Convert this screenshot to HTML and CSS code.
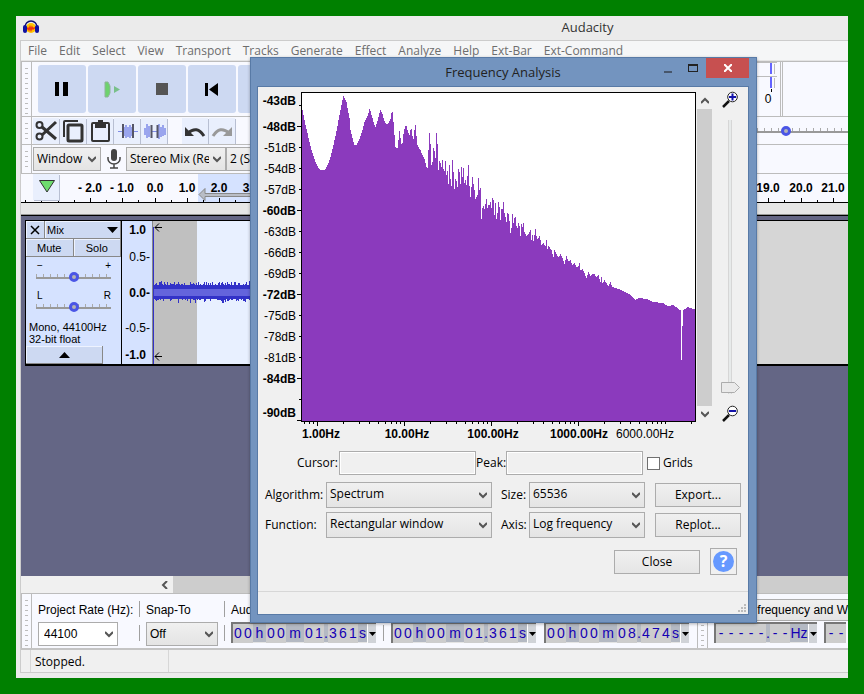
FILE: index.html
```html
<!DOCTYPE html>
<html lang="en">

<head>
	<meta charset="UTF-8">
	<title>Audacity</title>
	<link rel="stylesheet" href="styles.css">
</head>

<body>
	<div class="window">
		<header class="titlebar">
			<svg class="appIcon" width="16" height="14" viewBox="0 0 16 14">
				<circle cx="8" cy="8" r="5" fill="#ffc400"/>
				<path d="M3 9h1l1-1 1 2 1-3 1 3 1-3 1 2 1-1h2" fill="none" stroke="#f03010" stroke-width="1.4"/>
				<path d="M2 9V7a6 6 0 0 1 12 0v2" fill="none" stroke="#10106e" stroke-width="1.4"/>
				<rect x="0" y="5" width="4" height="8" rx="2" fill="#1010a0"/>
				<rect x="12" y="5" width="4" height="8" rx="2" fill="#1010a0"/>
			</svg>
			<span class="windowTitle">Audacity</span>
		</header>
		<div class="client">
			<nav class="menubar">
				<button>File</button>
				<button>Edit</button>
				<button>Select</button>
				<button>View</button>
				<button>Transport</button>
				<button>Tracks</button>
				<button>Generate</button>
				<button>Effect</button>
				<button>Analyze</button>
				<button>Help</button>
				<button>Ext-Bar</button>
				<button>Ext-Command</button>
			</nav>

			<div class="toolbar transport">
				<div class="grip"></div>
				<div class="transportButtons">
					<button aria-label="Pause"><svg width="48" height="48"><path d="M17 17h4v14h-4zM25 17h5v14h-5z" fill="#000"/></svg></button>
					<button aria-label="Play"><svg width="48" height="48"><path d="M17 17h3l2 4v7l-2 4h-3z" fill="#6dd36d" stroke="#8fb39a"/><path d="M26 21l6 3.500l-6 3.500z" fill="#79c08a"/></svg></button>
					<button aria-label="Stop"><svg width="48" height="48"><path d="M18 18h12v12h-12z" fill="#555"/></svg></button>
					<button aria-label="Skip to start"><svg width="48" height="48"><path d="M17 18h3v13h-3zM30 18v13l-9-6.500z" fill="#000"/></svg></button>
					<button aria-label="Skip to end"></button>
				</div>
				<div class="meter">
					<svg width="91" height="54">
						<path d="M0 .5h20M0 14.500h20M17.500 2v10M17.500 16v10" stroke="#bcbcbc" fill="none"/>
						<path d="M14 1v11M14 15v11" stroke="#6464ff" stroke-width="2"/>
						<path d="M14.500 27v3" stroke="#000"/>
						<text x="11" y="41" text-anchor="middle">0</text>
						<path d="M23.500 0v54M25.500 0v54" stroke="#bcbcbc"/>
					</svg>
				</div>
			</div>

			<div class="toolbar edit">
				<div class="grip"></div>
				<div class="editButtons">
					<button aria-label="Cut"><svg width="26" height="26" fill="none" stroke="#333" stroke-width="2"><circle cx="6.500" cy="7" r="3"/><circle cx="6.500" cy="18.500" r="3"/><path d="M9 9l14 12M9 17L23 4" stroke-width="3"/></svg></button>
					<button aria-label="Copy"><svg width="26" height="26" fill="none" stroke="#333" stroke-width="3"><rect x="8" y="7" width="14" height="16" rx="1"/><path d="M4 19V4q0-1 1-1h13" stroke-width="2"/></svg></button>
					<button aria-label="Paste"><svg width="26" height="26" fill="none" stroke="#333" stroke-width="2"><rect x="5" y="5" width="17" height="18" rx="1"/><path d="M9 5h9v4h-9z" fill="#333"/><path d="M11 3h5"/></svg></button>
					<button aria-label="Trim"><svg width="26" height="26" fill="none" stroke="#7f8ce8"><path d="M4 13.500h5M19 13.500h5"/><path d="M10 9v9M12 7v13M14 9v10M16 7v13M18 9v9" stroke-width="1.500"/><path d="M9 6v14M19 6v14" stroke="#556" stroke-width="2"/></svg></button>
					<button aria-label="Silence"><svg width="26" height="26" fill="none" stroke="#7f8ce8"><path d="M4 10v7M6 6v14M8 8v11M18 6v15M20 9v10M22 7v11M24 10v7" stroke-width="1.500"/><path d="M10 13.500h7"/><path d="M10.500 7v13M16.500 7v13" stroke="#556" stroke-width="2"/></svg></button>
					<button class="spaced" aria-label="Undo"><svg width="26" height="26" fill="none" stroke="#333" stroke-width="3"><path d="M6 15q9-8 16 3"/><path d="M3 9v9h9z" fill="#333" stroke="none"/></svg></button>
					<button aria-label="Redo"><svg width="26" height="26" fill="none" stroke="#999" stroke-width="3"><path d="M20 15q-9-8-16 3"/><path d="M23 9v9h-9z" fill="#999" stroke="none"/></svg></button>
				</div>
				<input class="ringSlider speed" type="range" value="30" aria-label="Playback speed">
			</div>

			<div class="toolbar device">
				<div class="grip"></div>
				<select class="host" aria-label="Audio host"><option>Window</option></select>
				<svg class="mic" width="14" height="20" viewBox="0 0 14 20"><rect x="4" y="0" width="6" height="12" rx="3" fill="#444"/><path d="M1 8v2a6 5 0 0 0 12 0V8M7 15v4M3 19h8" fill="none" stroke="#444" stroke-width="1.500"/></svg>
				<select class="recording" aria-label="Recording device"><option>Stereo Mix (Realtek High Definition Audio)</option></select>
				<select class="channels" aria-label="Recording channels"><option>2 (Stereo) Recording Channels</option></select>
			</div>

			<div class="timeline">
				<svg id="timelineScale" width="100%" height="29">
					<rect x="177" y="0" width="540" height="28" fill="#d5e2ff"/>
					<path d="M178 20.500l6-6v5h530v3h-530v4z" fill="#b9bdc6" stroke="#888"/>
				</svg>
				<button class="pin" aria-label="Pinned play head"><svg width="26" height="26"><path d="M6.500 6.500h15l-7.500 11.500z" fill="#6edc6e" stroke="#333"/></svg></button>
			</div>
			<div class="rulerGap"></div>

			<main class="tracks">
				<section class="track">
					<div class="trackPanel">
						<div class="trackHead">
							<button class="closeTrack" aria-label="Close track"><svg width="10" height="10"><path d="M1 1l8 8M9 1l-8 8" stroke="#000" stroke-width="1.500"/></svg></button>
							<button class="trackName">Mix<svg width="11" height="6"><path d="M0 0h11l-5.500 6z"/></svg></button>
						</div>
						<div class="muteSolo">
							<button>Mute</button>
							<button>Solo</button>
						</div>
						<div class="sliderLabels"><span>−</span><span>+</span></div>
						<input class="ringSlider" type="range" aria-label="Gain">
						<div class="sliderLabels second"><span>L</span><span>R</span></div>
						<input class="ringSlider" type="range" aria-label="Pan">
						<div class="trackInfo">Mono, 44100Hz<br>32-bit float</div>
						<button class="collapse" aria-label="Collapse track"><svg width="11" height="6"><path d="M0 6h11l-5.500-6z"/></svg></button>
					</div>
					<div class="levels">
						<b>1.0</b>
						<span>0.5-</span>
						<b>0.0-</b>
						<span>-0.5-</span>
						<b>-1.0</b>
					</div>
					<svg id="wave" class="wave" width="100%" height="143">
						<rect width="44" height="143" fill="#c0c0c0"/>
						<rect x="44" width="540" height="143" fill="#e8f0ff"/>
						<path d="M.5 6v137" stroke="#3232c8"/>
						<path d="M2 6.500h7M6 2.500l-4 4l4 4M2 135.500h7M6 131.500l-4 4l4 4" fill="none" stroke="#000"/>
					</svg>
				</section>
			</main>

			<div class="hscroll">
				<button aria-label="Scroll left"><svg width="8" height="8"><path d="M6 0L2 4l4 4" fill="none" stroke="#555" stroke-width="2"/></svg></button>
				<div class="hthumb"></div>
			</div>

			<div class="toolbar selection">
				<div class="grip"></div>
				<div class="field rate">
					<label for="rate">Project Rate (Hz):</label>
					<select id="rate"><option>44100</option></select>
				</div>
				<div class="divider"></div>
				<div class="field snap">
					<label for="snap">Snap-To</label>
					<select id="snap"><option>Off</option></select>
				</div>
				<div class="divider"></div>
				<div class="field">
					<span class="fieldLabel">Audio Position</span>
					<div class="clock"><i>0</i><i>0</i><span class="h">h</span><i>0</i><i>0</i><span class="m">m</span><i>0</i><i>1</i><span class="dot">.</span><i>3</i><i>6</i><i>1</i><span class="s">s</span><button aria-label="Position format"></button></div>
				</div>
				<div class="divider low"></div>
				<div class="field low">
					<div class="clock"><i>0</i><i>0</i><span class="h">h</span><i>0</i><i>0</i><span class="m">m</span><i>0</i><i>1</i><span class="dot">.</span><i>3</i><i>6</i><i>1</i><span class="s">s</span><button aria-label="Start format"></button></div>
					<div class="clock"><i>0</i><i>0</i><span class="h">h</span><i>0</i><i>0</i><span class="m">m</span><i>0</i><i>8</i><span class="dot">.</span><i>4</i><i>7</i><i>4</i><span class="s">s</span><button aria-label="End format"></button></div>
				</div>
				<div class="grip spectralGrip"></div>
				<div class="spectral">
					<select aria-label="Spectral selection"><option>Center frequency and Width</option></select>
					<div class="spectralClocks">
						<div class="clock"><i>-</i><i>-</i><i>-</i><i>-</i><i>-</i><span class="dot">.</span><i>-</i><i>-</i><span class="hz">Hz</span><button aria-label="Frequency format"></button></div>
						<div class="clock"><i>-</i><i>-</i></div>
					</div>
				</div>
			</div>

			<footer class="statusbar"><span>Stopped.</span></footer>
		</div>
	</div>

	<div class="dialog" role="dialog" aria-labelledby="dialogTitle">
		<div class="dialogBar">
			<h2 id="dialogTitle">Frequency Analysis</h2>
			<div class="windowButtons">
				<button aria-label="Minimize"><svg width="8" height="12"><path d="M0 10h8" stroke="#47566b" stroke-width="2"/></svg></button>
				<button aria-label="Maximize"><svg width="10" height="8"><path d="M0 1h10" stroke="#222" stroke-width="2"/><path d="M.5 0v8M9.500 0v8M0 7.500h10" stroke="#222"/></svg></button>
				<button class="closeButton" aria-label="Close"><svg width="8" height="8"><path d="M0 0l8 8M8 0L0 8" stroke="#fff" stroke-width="2"/></svg></button>
			</div>
		</div>
		<div class="dialogBody">
			<div class="plotRow">
				<svg id="plot" class="plot" width="438" height="354">
					<rect x="43.500" y="5.500" width="394" height="329" fill="#fff" stroke="#000"/>
				</svg>
				<div class="vscroll">
					<button aria-label="Scroll up"><svg width="8" height="8"><path d="M0 6l4-4l4 4" fill="none" stroke="#555" stroke-width="2"/></svg></button>
					<div class="vthumb"></div>
					<button aria-label="Scroll down"><svg width="8" height="8"><path d="M0 2l4 4l4-4" fill="none" stroke="#555" stroke-width="2"/></svg></button>
				</div>
				<div class="zoomColumn">
					<svg width="17" height="17"><path d="M7 10l-6 6" stroke="#111" stroke-width="2.500"/><circle cx="10.500" cy="6" r="4.800" fill="#fff" stroke="#222"/><path d="M7 6h7M10.500 2.500v7" stroke="#1414aa" stroke-width="2"/></svg>
					<input class="zoomSlider" type="range" value="100" aria-label="Zoom">
					<svg width="17" height="17"><path d="M7 10l-6 6" stroke="#111" stroke-width="2.500"/><circle cx="10.500" cy="6" r="4.800" fill="#fff" stroke="#222"/><path d="M7 6h7" stroke="#1414aa" stroke-width="2"/></svg>
				</div>
			</div>
			<div class="readouts">
				<label for="cursor">Cursor:</label>
				<input id="cursor" type="text" readonly>
				<label for="peak">Peak:</label>
				<input id="peak" type="text" readonly>
				<label class="grids"><input type="checkbox">Grids</label>
			</div>
			<div class="options">
				<label for="algorithm">Algorithm:</label>
				<select id="algorithm"><option>Spectrum</option></select>
				<label class="inner" for="size">Size:</label>
				<select id="size"><option>65536</option></select>
				<button class="push">Export...</button>
				<label for="function">Function:</label>
				<select id="function"><option>Rectangular window</option></select>
				<label class="inner" for="axis">Axis:</label>
				<select id="axis"><option>Log frequency</option></select>
				<button class="push">Replot...</button>
			</div>
			<div class="closeRow">
				<button class="push">Close</button>
				<button class="help" aria-label="Help"><span>?</span></button>
			</div>
			<div class="dialogStatus">
				<svg width="8" height="8" fill="#bbb"><path d="M6 0h2v2h-2zM3 3h2v2h-2zM6 3h2v2h-2zM0 6h2v2h-2zM3 6h2v2h-2zM6 6h2v2h-2z"/></svg>
			</div>
		</div>
	</div>

	<script>
		// x, y pairs inside the plot, columns in between are interpolated
		const spectrum = [
			0,17, 1,22, 2,27, 3,32, 4,36, 5,40, 6,45, 7,49, 8,53, 9,57, 11,63, 13,69, 15,73, 17,76, 19,77, 22,77, 24,74, 26,70, 28,64, 30,56,
			32,47, 34,38, 36,27, 38,17, 40,7, 41,3, 42,5, 44,9, 45,15, 47,25, 48,37, 50,45, 52,52, 54,52, 56,48, 58,43, 60,37, 62,29, 65,23, 67,16,
			68,18, 70,25, 72,32, 73,34, 75,28, 77,20, 78,17, 80,21, 82,28, 84,31, 86,30, 88,26, 89,20, 90,19, 91,29, 92,42, 93,54, 95,55, 96,47,
			97,38, 98,45, 99,51, 100,50, 101,41, 102,36, 103,33, 104,33, 105,37, 107,42, 108,37, 109,36, 110,43, 111,46, 112,37, 113,32, 114,43,
			115,52, 116,54, 118,57, 120,62, 122,66, 124,74, 125,75, 126,57, 127,40, 128,51, 129,72, 130,69, 131,55, 132,58, 133,65, 134,40,
			135,51, 136,77, 137,68, 138,70, 139,74, 140,67, 141,76, 142,78, 143,68, 144,82, 145,78, 146,91, 147,72, 148,86, 149,93, 150,67,
			151,79, 152,96, 153,86, 154,88, 155,94, 156,76, 157,79, 158,91, 159,74, 160,84, 161,75, 162,90, 163,87, 164,92, 165,83, 166,72,
			167,93, 168,104, 169,94, 170,84, 171,91, 172,97, 173,106, 174,104, 175,102, 176,85, 177,97, 178,95, 179,126, 180,115, 181,113,
			182,116, 183,111, 184,106, 185,115, 186,112, 187,112, 188,109, 189,115, 190,105, 191,107, 192,122, 193,110, 194,126, 195,120,
			196,109, 197,114, 198,127, 199,116, 200,116, 201,109, 202,120, 203,124, 204,129, 205,120, 206,121, 207,128, 208,140, 209,135,
			210,121, 211,130, 212,125, 213,124, 214,133, 215,135, 216,130, 217,133, 218,143, 219,131, 220,134, 221,130, 222,139, 224,143,
			226,141, 228,137, 229,147, 230,142, 231,148, 233,136, 234,143, 235,146, 237,143, 238,147, 239,152, 241,150, 243,153, 244,147,
			245,156, 246,153, 249,157, 251,164, 252,157, 254,161, 256,164, 258,161, 260,165, 262,171, 264,163, 266,168, 268,167, 270,172,
			272,170, 274,174, 276,173, 277,170, 278,177, 280,176, 282,180, 284,185, 286,179, 288,183, 290,181, 292,181, 294,184, 296,182,
			298,189, 299,184, 300,190, 302,187, 304,190, 306,193, 308,189, 310,194, 313,195, 317,196, 323,199, 328,202, 333,207, 336,205,
			345,206, 351,209, 361,210, 365,213, 371,212, 376,216, 378,217, 379,267, 380,233, 381,217, 385,214, 391,216, 393,216
		]
		const svgNS = 'http://www.w3.org/2000/svg'
		function add(parent, name, attrs, text) {
			const el = document.createElementNS(svgNS, name)
			for (const key in attrs) {
				el.setAttribute(key, attrs[key])
			}
			if (text) {
				el.textContent = text
			}
			parent.appendChild(el)
		}

		// frequency plot
		const plot = document.getElementById('plot')
		let d = 'M44 334'
		for (let i = 0; i < spectrum.length - 2; i += 2) {
			const [x0, y0, x1, y1] = spectrum.slice(i, i + 4)
			for (let x = x0; x < x1; x++) {
				d += 'V' + (6 + Math.round(y0 + (y1 - y0) * (x - x0) / (x1 - x0))) + 'h1'
			}
		}
		add(plot, 'path', { d: d + 'V334z', fill: '#8b3abd' })

		let ticks = ''
		for (let db = 45; db <= 90; db += 3) {
			const y = 18 + (db - 45) * 7
			const major = db % 12 === 0 || db === 90
			ticks += 'M' + (major ? 39 : 41) + ' ' + (y + 0.5) + 'H43'
			if (db !== 45 && db < 87) {
				add(plot, 'text', { x: 38, y: y + 5, 'text-anchor': 'end', class: major ? 'major' : '' }, '-' + db + 'dB')
			}
		}
		add(plot, 'text', { x: 38, y: 18, 'text-anchor': 'end', class: 'major' }, '-43dB')
		add(plot, 'text', { x: 38, y: 330, 'text-anchor': 'end', class: 'major' }, '-90dB')
		for (let decade = -1; decade < 5; decade++) {
			for (let k = 1; k < 10; k++) {
				const x = 59 + Math.round(87 * (decade + Math.log10(k)))
				if (x > 43 && x < 434) {
					ticks += 'M' + (x + 0.5) + ' 335v' + (k === 1 && decade < 4 ? 4 : 2)
				}
			}
		}
		add(plot, 'path', { d: ticks, stroke: '#000' })
		const freqLabels = ['1.00Hz', '10.00Hz', '100.00Hz', '1000.00Hz']
		freqLabels.forEach((label, i) => {
			add(plot, 'text', { x: 63 + 86 * i, y: 351, 'text-anchor': 'middle', class: 'major' }, label)
		})
		add(plot, 'text', { x: 387, y: 351, 'text-anchor': 'middle' }, '6000.00Hz')

		// timeline
		const timeline = document.getElementById('timelineScale')
		const labelled = [-2, -1, 0, 1, 2, 3, 19, 20, 21]
		let scale = ''
		for (let t = -4; t < 22; t += 0.5) {
			const x = Math.round(133.5 + t * 32.3)
			const shown = labelled.includes(t)
			scale += 'M' + (x + 0.5) + ' 28v' + (shown ? -4 : -2)
			if (shown) {
				add(timeline, 'text', { x: x, y: 18, 'text-anchor': 'middle', class: 'major' }, (t < 0 ? '- ' : '') + Math.abs(t).toFixed(1))
			}
		}
		add(timeline, 'path', { d: scale + 'M0 28.500H2000', stroke: '#000' })

		// waveform
		const wave = document.getElementById('wave')
		let seed = 7
		function noise() {
			seed = (seed * 16807) % 2147483647
			return seed / 2147483647
		}
		let peaks = ''
		for (let x = 1; x < 600; x++) {
			const up = 7 + Math.floor(noise() * noise() * 5)
			const down = 7 + Math.floor(noise() * noise() * 5)
			peaks += 'M' + (x + 0.5) + ' ' + (71 - up) + 'v' + (up + down)
		}
		add(wave, 'path', { d: peaks, stroke: '#3232c8' })
		add(wave, 'rect', { x: 1, y: 68, width: 600, height: 7, fill: '#6464dc' })
	</script>
</body>

</html>
```
FILE: styles.css
```css
* {
	box-sizing: border-box;
}
body {
	display: flex;
	min-height: 100vh;
	margin: 0;
	padding: 16px;
	background: #008000;
	font-family: "Open Sans", "Noto Sans", sans-serif;
	font-size: 12px;
	line-height: 16px;
	color: #000;
}
button, select, input {
	margin: 0;
	padding: 0;
	border: 0;
	border-radius: 0;
	background: none;
	font: inherit;
	color: inherit;
}
svg {
	display: block;
}
svg text {
	font-family: "Liberation Sans", Arial, sans-serif;
	font-size: 12px;
}
svg text.major {
	font-weight: bold;
}
select {
	appearance: none;
	height: 24px;
	padding: 0 16px 0 3px;
	border: 1px solid #acacac;
	background: url("data:image/svg+xml,%3Csvg xmlns='http://www.w3.org/2000/svg' width='8' height='7'%3E%3Cpath d='M0 1l4 4l4-4' fill='none' stroke='%23555' stroke-width='2'/%3E%3C/svg%3E") no-repeat right 4px center, linear-gradient(#f0f0f0, #e4e4e4);
}

.window {
	display: flex;
	flex-direction: column;
	flex: 1;
	min-width: 0;
	padding: 0 0 5px 4px;
	background: #ebebeb;
	overflow: hidden;
}
.titlebar {
	display: flex;
	align-items: center;
	height: 24px;
	padding: 0 0 2px 3px;
}
.windowTitle {
	flex: 1;
	padding-left: 288px;
	text-align: center;
	font-size: 13px;
	color: #333;
}
.client {
	display: flex;
	flex-direction: column;
	flex: 1;
	border: 1px solid #ccc;
	border-right: 0;
	background: #f0f0f0;
}
.menubar {
	display: flex;
	gap: 12px;
	height: 20px;
	padding-left: 7px;
	border-bottom: 1px solid #e4e4e4;
	background: #f5f6f7;
	color: #6d6d6d;
}
.menubar button {
	white-space: nowrap;
}

.toolbar {
	display: flex;
	align-items: center;
	border-top: 1px solid #bcbcbc;
	background: #f8f9ff;
}
.grip {
	flex: none;
	align-self: stretch;
	width: 11px;
	border: solid #bcbcbc;
	border-width: 0 1px;
	background: repeating-linear-gradient(transparent 0 4px, #bcbcbc 4px 5px) content-box;
	padding: 2px 3px;
}
.transport {
	height: 55px;
}
.transportButtons {
	display: flex;
	gap: 2px;
	padding-left: 6px;
}
.transportButtons button {
	width: 48px;
	height: 48px;
	border-radius: 3px;
	background: #cdd9f2;
}
.meter, .speed {
	width: 91px;
	margin-left: auto;
}
.edit {
	height: 28px;
}
.editButtons {
	display: flex;
	gap: 1px;
	padding-left: 1px;
}
.editButtons button, .pin {
	width: 26px;
	height: 26px;
	background: #e9effd;
	box-shadow: 1px 1px #b8bfd2;
}
.editButtons .spaced {
	margin-left: 14px;
}
.device {
	height: 29px;
}
.device select {
	flex: none;
}
.host {
	width: 68px;
	margin-left: 1px;
}
.mic {
	margin: 0 5px 0 6px;
}
.recording {
	width: 100px;
}
.channels {
	width: 110px;
}
.timeline {
	display: grid;
	border-top: 1px solid #bcbcbc;
	background: #f8f9ff;
}
.timeline > * {
	grid-area: 1 / 1;
}
.pin {
	margin-left: 12px;
}
.rulerGap {
	height: 13px;
	border-bottom: 1px solid #000;
	background: #e6e6e6;
	box-shadow: inset 0 -1px #999;
}

.ringSlider {
	appearance: none;
	height: 12px;
	background: linear-gradient(#999, #999) 0 6px / 100% 2px no-repeat, repeating-linear-gradient(90deg, #aaa 0 1px, transparent 1px 7px) 0 3px / 100% 3px no-repeat;
}
.ringSlider::-webkit-slider-thumb {
	appearance: none;
	width: 10px;
	height: 10px;
	border: 3px solid #4a55e6;
	border-radius: 50%;
	background: #b4b4b4;
}

.tracks {
	flex: 1;
	padding: 4px 0 0 4px;
	background: #646685;
}
.track {
	display: flex;
	border: solid #000;
	border-width: 1px 0 2px 1px;
	font-family: "Liberation Sans", Arial, sans-serif;
	background: #d6d6d6;
}
.trackPanel {
	display: flex;
	flex-direction: column;
	flex: none;
	width: 96px;
	border-right: 1px solid #000;
	background: #d5e2ff;
}
.trackPanel button {
	display: flex;
	align-items: center;
	justify-content: center;
	height: 18px;
	border: solid #888;
	border-width: 0 1px 1px 0;
	background: #cdd9f2;
	box-shadow: inset 1px 1px #eef3ff;
	font-size: 11px;
}
.trackHead, .muteSolo {
	display: flex;
}
.trackPanel .closeTrack {
	width: 19px;
}
.trackPanel .trackName {
	flex: 1;
	justify-content: space-between;
	padding: 0 2px;
}
.muteSolo button {
	flex: 1;
}
.trackPanel .ringSlider {
	width: 75px;
	margin-left: 10px;
}
.sliderLabels {
	display: flex;
	justify-content: space-between;
	height: 11px;
	margin: 3px 10px 0 11px;
	font-size: 10px;
	line-height: 11px;
}
.sliderLabels.second {
	margin-top: 7px;
}
.trackInfo {
	margin-top: 8px;
	padding-left: 3px;
	font-size: 11px;
	line-height: 12px;
}
.trackPanel .collapse {
	width: 77px;
	margin-top: auto;
}
.levels {
	display: grid;
	grid-template-rows: 18px 36px 1fr 36px 18px;
	align-items: center;
	flex: none;
	width: 31px;
	padding-right: 2px;
	border-right: 1px solid #888;
	background: #d5e2ff;
	text-align: right;
}
.levels b:first-child, .levels b:last-child {
	padding-right: 4px;
}
.wave {
	flex: 1;
	min-width: 0;
}

.hscroll {
	display: flex;
	height: 17px;
	padding-left: 136px;
}
.hscroll button {
	display: flex;
	align-items: center;
	justify-content: center;
	width: 16px;
}
.hthumb {
	flex: 1;
	background: #cdcdcd;
}

.selection {
	height: 57px;
	border-bottom: 2px solid #c4c4c4;
	font-family: "Liberation Sans", Arial, sans-serif;
	overflow: hidden;
}
.field {
	display: flex;
	flex-direction: column;
	flex: none;
	align-self: stretch;
	gap: 4px;
	padding-top: 8px;
}
.field.low {
	flex-direction: row;
	gap: 8px;
	padding-top: 28px;
}
.rate {
	width: 101px;
	margin-left: 6px;
}
.rate label {
	white-space: nowrap;
}
.rate select {
	width: 80px;
	padding-left: 5px;
	background-color: #fff;
	background-image: url("data:image/svg+xml,%3Csvg xmlns='http://www.w3.org/2000/svg' width='8' height='7'%3E%3Cpath d='M0 1l4 4l4-4' fill='none' stroke='%23555' stroke-width='2'/%3E%3C/svg%3E");
}
.snap {
	width: 72px;
}
.divider {
	flex: none;
	width: 1px;
	height: 40px;
	margin: 0 6px;
	background: linear-gradient(#a0a0a0 0 16px, transparent 16px 24px, #a0a0a0 24px);
}
.rate + .divider {
	margin-left: 0;
}
.divider.low {
	margin: 0 7px;
	background: linear-gradient(transparent 0 24px, #a0a0a0 24px);
}
.clock {
	display: flex;
	flex: none;
	height: 21px;
	border: solid #777;
	border-width: 2px 0 0 2px;
	box-shadow: inset -1px -1px #e4e4e4;
	background: #b4b9c3;
	font-size: 14px;
	line-height: 18px;
	color: #1400b4;
}
.clock i {
	width: 10px;
	background: #cdcdcd;
	font-style: normal;
	text-align: center;
}
.clock span {
	text-align: center;
}
.clock .h {
	width: 13px;
}
.clock .m {
	width: 18px;
}
.clock .dot {
	width: 4px;
}
.clock .s {
	width: 9px;
}
.clock .hz {
	width: 18px;
}
.clock button {
	width: 9px;
	border-left: 1px solid #fff;
	background: url("data:image/svg+xml,%3Csvg xmlns='http://www.w3.org/2000/svg' width='7' height='4'%3E%3Cpath d='M0 0h7l-3.500 4z'/%3E%3C/svg%3E") no-repeat center #d0d3d8;
}
.spectralGrip {
	margin-left: 8px;
}
.spectral {
	display: flex;
	flex-direction: column;
	flex: none;
	align-self: stretch;
	gap: 1px;
	padding: 5px 0 0 6px;
}
.spectral select {
	width: 200px;
	height: 22px;
}
.spectralClocks {
	display: flex;
	gap: 7px;
}
.statusbar {
	display: flex;
	height: 22px;
	padding-left: 9px;
}
.statusbar span {
	width: 139px;
	padding: 4px;
	border: solid #d7d7d7;
	border-width: 0 1px;
}

.dialog {
	position: absolute;
	left: 250px;
	top: 57px;
	width: 507px;
	padding: 0 7px 7px 6px;
	border: 1px solid #587aa6;
	background: #7394bf;
	box-shadow: 0 1px 3px rgba(0, 0, 0, 0.3);
}
.dialogBar {
	display: flex;
	justify-content: flex-end;
	height: 28px;
}
.dialogBar h2 {
	flex: 1;
	margin: 0;
	padding: 6px 0 0 94px;
	text-align: center;
	font-size: 13px;
	font-weight: normal;
	color: #222;
}
.windowButtons {
	display: flex;
	height: 20px;
}
.windowButtons button {
	display: flex;
	align-items: center;
	justify-content: center;
	width: 25px;
}
.windowButtons .closeButton {
	width: 43px;
	margin-left: 1px;
	background: #c75050;
}
.dialogBody {
	border: 1px solid #587aa6;
	background: #f0f0f0;
}
.plotRow {
	display: flex;
	height: 360px;
}
.plot {
	flex: none;
}
.vscroll {
	display: flex;
	flex-direction: column;
	flex: none;
	width: 15px;
	height: 329px;
	margin: 6px 0 0 1px;
}
.vscroll button {
	display: flex;
	align-items: center;
	justify-content: center;
	height: 16px;
}
.vthumb {
	flex: 1;
	background: #cdcdcd;
}
.zoomColumn {
	display: flex;
	flex-direction: column;
	align-items: center;
	flex: 1;
	height: 335px;
	padding-top: 4px;
}
.zoomSlider {
	appearance: none;
	flex: 1;
	writing-mode: vertical-lr;
	width: 19px;
	margin: 12px 0 11px;
	background: linear-gradient(90deg, #d6d6d6 1px, #e7eaea 1px 3px, #d6d6d6 3px) center / 4px 100% no-repeat;
}
.zoomSlider::-webkit-slider-thumb {
	appearance: none;
	width: 19px;
	height: 12px;
	background: url("data:image/svg+xml,%3Csvg xmlns='http://www.w3.org/2000/svg' width='19' height='12'%3E%3Cpath d='M.5 .5h13l5 5l-5 5h-13z' fill='%23eaeaea' stroke='%23acacac'/%3E%3C/svg%3E") no-repeat;
}
.readouts {
	display: flex;
	align-items: center;
	height: 24px;
	margin: 4px 0 0 39px;
}
.readouts label {
	flex: none;
	width: 42px;
}
.readouts input[type=text] {
	width: 137px;
	height: 24px;
	border: 1px solid #acacac;
	box-shadow: inset 0 0 0 1px #fff;
}
.readouts label[for=peak] {
	width: 30px;
}
.readouts .grids {
	display: flex;
	align-items: center;
	gap: 3px;
	width: auto;
	margin-left: 4px;
}
.grids input {
	appearance: none;
	width: 13px;
	height: 13px;
	border: 1px solid #707070;
	background: #fff;
}
.options {
	display: grid;
	grid-template-columns: 61px 166px 37px 116px 96px;
	row-gap: 4px;
	align-items: center;
	margin: 7px 0 0 7px;
}
.options select {
	height: 26px;
	padding-bottom: 2px;
}
.options .inner {
	padding-left: 9px;
}
.push {
	width: 86px;
	height: 24px;
	border: 1px solid #acacac;
	background: linear-gradient(#f0f0f0, #e5e5e5);
}
.options .push {
	justify-self: end;
}
.closeRow {
	display: flex;
	align-items: center;
	justify-content: flex-end;
	gap: 10px;
	margin: 10px 11px 16px 0;
}
.help {
	display: flex;
	align-items: center;
	justify-content: center;
	width: 27px;
	height: 27px;
	border: 1px solid #acacac;
}
.help span {
	width: 21px;
	height: 21px;
	border-radius: 50%;
	background: #6699ff;
	font-size: 16px;
	font-weight: bold;
	line-height: 21px;
	color: #fff;
}
.dialogStatus {
	display: flex;
	align-items: flex-end;
	justify-content: flex-end;
	height: 23px;
	padding: 2px;
	border-top: 1px solid #d7d7d7;
}
```
